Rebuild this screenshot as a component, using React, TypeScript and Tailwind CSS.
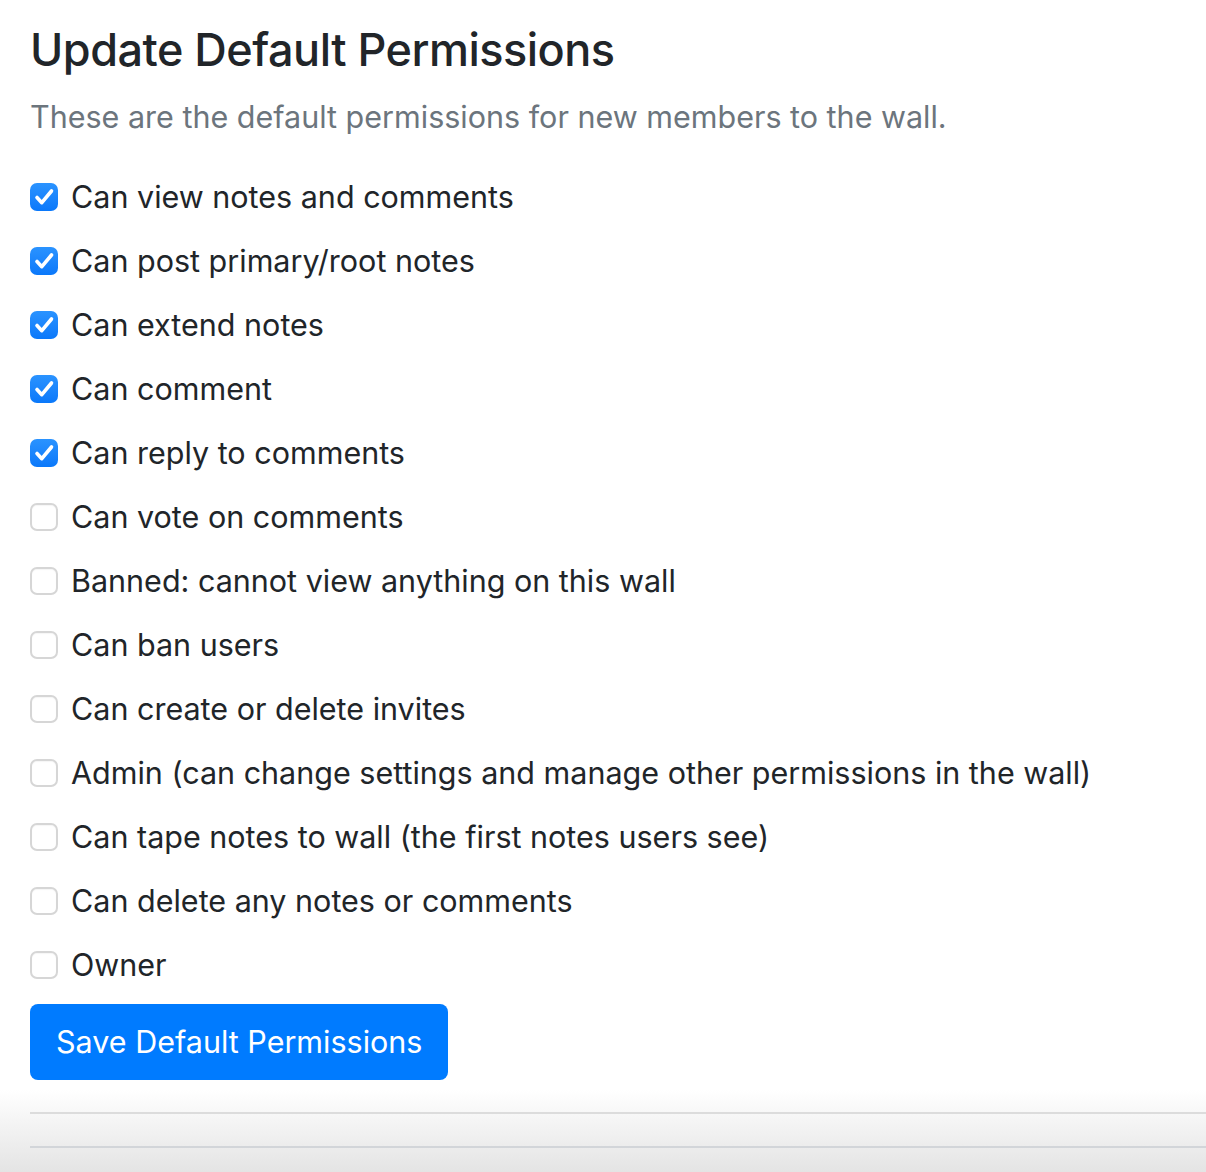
import { useState } from 'react';

const PERMISSIONS: { key: string; label: string; checked: boolean }[] = [
  { key: 'view', label: 'Can view notes and comments', checked: true },
  { key: 'post', label: 'Can post primary/root notes', checked: true },
  { key: 'extend', label: 'Can extend notes', checked: true },
  { key: 'comment', label: 'Can comment', checked: true },
  { key: 'reply', label: 'Can reply to comments', checked: true },
  { key: 'vote', label: 'Can vote on comments', checked: false },
  { key: 'banned', label: 'Banned: cannot view anything on this wall', checked: false },
  { key: 'ban', label: 'Can ban users', checked: false },
  { key: 'invites', label: 'Can create or delete invites', checked: false },
  { key: 'admin', label: 'Admin (can change settings and manage other permissions in the wall)', checked: false },
  { key: 'tape', label: 'Can tape notes to wall (the first notes users see)', checked: false },
  { key: 'delete', label: 'Can delete any notes or comments', checked: false },
  { key: 'owner', label: 'Owner', checked: false },
];

function Checkbox({ checked }: { checked: boolean }) {
  if (checked) {
    return (
      <span className="block h-[28px] w-[28px] shrink-0 rounded-[7px] bg-gradient-to-b from-[#2a93ff] to-[#0a78fa]">
        <svg width="28" height="28" viewBox="0 0 28 28" fill="none">
          <path d="M7 14.5l4.8 5.2L21.5 8" stroke="white" strokeWidth="3.6" strokeLinecap="round" strokeLinejoin="round" />
        </svg>
      </span>
    );
  }
  return (
    <span className="block h-[28px] w-[28px] shrink-0 rounded-[7px] border-2 border-[#d6d6d6] bg-white shadow-[inset_0_1px_1px_rgba(0,0,0,0.04)]" />
  );
}

export default function App() {
  const [perms, setPerms] = useState(PERMISSIONS);

  const toggle = (key: string) => {
    setPerms(perms.map((p) => (p.key === key ? { ...p, checked: !p.checked } : p)));
  };

  return (
    <div className="bg-white font-['Inter',sans-serif] text-[#212529]">
      <div className="pl-[30px] pt-[22px]">
        <h1 className="text-[45px] font-medium leading-[56px] tracking-[-0.5px]">Update Default Permissions</h1>
        <p className="mt-[19px] text-[30.5px] leading-[40px] text-[#6c757d]">
          These are the default permissions for new members to the wall.
        </p>

        {/* Permission checkboxes */}
        <div className="mt-[36px] flex flex-col gap-[16px]">
          {perms.map((p) => (
            <label
              key={p.key}
              onClick={() => toggle(p.key)}
              className="flex h-[48px] cursor-pointer items-center gap-[13px]"
            >
              <Checkbox checked={p.checked} />
              <span className="text-[30.5px] leading-[48px]">{p.label}</span>
            </label>
          ))}
        </div>

        <button className="mt-[15px] h-[76px] rounded-[8px] bg-[#007bff] px-[26px] text-[30.5px] text-white">
          Save Default Permissions
        </button>
      </div>

      {/* Footer lines */}
      <div className="mt-[10px] bg-gradient-to-b from-white to-[#e4e4e4] pl-[30px]">
        <div className="h-[22px]" />
        <div className="h-[2px] bg-[#dcdcdc]" />
        <div className="h-[32px]" />
        <div className="h-[2px] bg-[#d2d5d9]" />
        <div className="h-[24px]" />
      </div>
    </div>
  );
}
